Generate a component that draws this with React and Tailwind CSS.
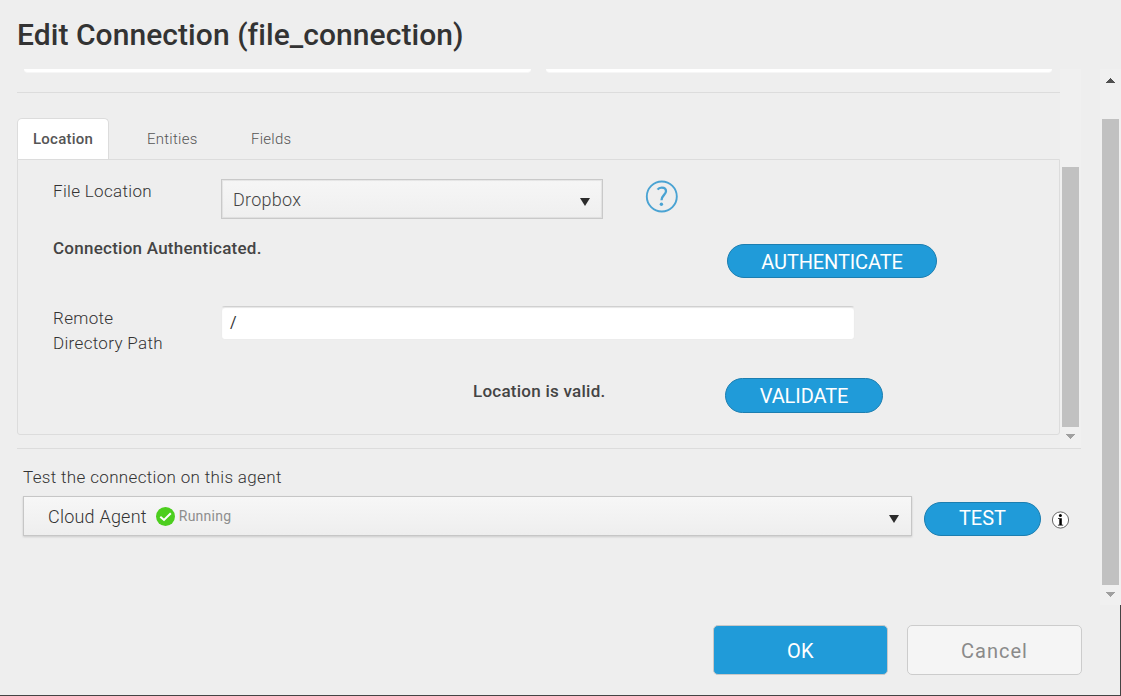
import React from "react";

function Arrow({ up = false, className }) {
  return (
    <svg className={className} width="9" height="5" viewBox="0 0 9 5" fill="currentColor" shapeRendering="crispEdges">
      <path d={up ? "M0 5L4.5 0L9 5Z" : "M0 0H9L4.5 5Z"} />
    </svg>
  );
}

function Caret() {
  return (
    <svg width="10" height="8" viewBox="0 0 10 8" fill="#2b2b2b">
      <path d="M0 0H10L5 8Z" />
    </svg>
  );
}

function PillButton({ className, children }) {
  return (
    <button
      className={`flex shrink-0 justify-center rounded-full border border-[#1c7eb0] bg-[#209bd9] text-[20px] whitespace-nowrap text-white ${className}`}
    >
      {children}
    </button>
  );
}

function Header() {
  return (
    <header className="h-[69px] shrink-0 pt-[15px] pl-[17px]">
      <h1 className="text-[30px] leading-10 font-medium tracking-[0.06px] text-[#333]">
        Edit Connection (file_connection)
      </h1>
    </header>
  );
}

function Tabs() {
  return (
    <nav className="flex h-[41px] text-[15px] leading-[42px] tracking-[0.25px] text-[#555]">
      <span className="w-[92px] rounded-t-[5px] border border-b-0 border-[#dcdcdc] bg-white pl-[15px] font-medium leading-10 text-[#555]">
        Location
      </span>
      <span className="ml-[38px] w-[104px] font-light">Entities</span>
      <span className="font-light">Fields</span>
    </nav>
  );
}

function LocationPanel() {
  return (
    <section className="h-[276px] rounded-b-[3px] border border-[#dcdcdc] text-[17px] leading-[25px] tracking-[0.33px] text-[#333]">
      <div className="flex h-[84px] pt-[19px] pl-[35px]">
        <span className="w-[168px] font-light">File Location</span>
        <div className="flex h-10 w-[382px] items-center justify-between border border-[#c9c9c9] bg-linear-to-b from-[#f6f6f6] to-[#efefef] pr-3 pl-[11px] inset-shadow-[0_0_1px_1px_rgba(0,0,0,0.07)]">
          <span className="text-[18px] font-light tracking-[0.25px] text-[#444]">Dropbox</span>
          <span className="pt-[5px]">
            <Caret />
          </span>
        </div>
        <svg className="ml-[42px]" width="34" height="34" viewBox="0 0 34 34" fill="none" stroke="#4aa3d3">
          <circle cx="16.8" cy="17.5" r="15" strokeWidth="1.9" />
          <path d="M12.6 10.6C13.5 9.2 15 8.6 16.8 8.6C19.4 8.6 21 10 21 12.2C21 15.6 16.5 16.4 16.5 21.2" strokeWidth="2.3" />
          <circle cx="16.4" cy="25.2" r="1.7" fill="#4aa3d3" stroke="none" />
        </svg>
      </div>
      <div className="flex h-[62px] pl-[35px]">
        <span className="-mt-2 w-[674px] font-medium tracking-[0.25px] text-[#444]">Connection Authenticated.</span>
        <PillButton className="h-[34px] w-[210px] leading-[34px] tracking-[-0.12px]">AUTHENTICATE</PillButton>
      </div>
      <div className="flex h-[72px] pl-[35px]">
        <span className="w-[168px] font-light">
          Remote
          <br />
          Directory Path
        </span>
        <div className="h-[34px] w-[634px] rounded-[4px] border border-[#ececec] border-t-[#d0d0d0] bg-white pl-[8px] text-[16px] leading-[31px] text-[#333] inset-shadow-[0_1px_1px_rgba(0,0,0,0.1)]">
          /
        </div>
      </div>
      <div className="flex pl-[455px]">
        <span className="w-[252px] pt-px font-medium tracking-[0.25px] text-[#444]">Location is valid.</span>
        <PillButton className="h-[35px] w-[158px] leading-[34px] tracking-[-0.1px]">VALIDATE</PillButton>
      </div>
    </section>
  );
}

function AgentTest() {
  return (
    <div className="pl-[6px]">
      <p className="pt-[16px] text-[17px] leading-[25px] font-light tracking-[0.34px] text-[#333]">
        Test the connection on this agent
      </p>
      <div className="mt-[6px] flex">
        <div className="flex h-10 w-[889px] items-center border border-[#c6c6c6] bg-linear-to-b from-[#f7f7f7] to-[#eeeeee] pr-3 pl-6 shadow-[0_1px_2px_rgba(0,0,0,0.15)]">
          <span className="text-[18px] font-light tracking-[0.22px] text-[#333]">Cloud Agent</span>
          <svg className="ml-[9px]" width="19" height="19" viewBox="0 0 19 19" fill="none">
            <circle cx="9.5" cy="9.5" r="9.5" fill="#4cce1e" />
            <path d="M4.3 9.7L8 13L14.8 6.2" stroke="#fff" strokeWidth="2" />
          </svg>
          <span className="ml-[4px] text-[14px] tracking-[0.25px] text-[#8e8e8e]">Running</span>
          <span className="ml-auto pt-[5px]">
            <Caret />
          </span>
        </div>
        <PillButton className="mt-[6px] ml-[12px] h-[34px] w-[117px] leading-[31px]">TEST</PillButton>
        <svg className="mt-[15px] ml-[11px]" width="18" height="18" viewBox="0 0 18 18">
          <circle cx="8.5" cy="9" r="8.1" fill="#fff" stroke="#555" strokeWidth="0.9" />
          <circle cx="8.4" cy="4.6" r="1.5" fill="#000" />
          <path d="M6 7.2H9.8V13.7H11.2V14.6H5.9V13.7H7.3V8.1H6Z" fill="#000" />
        </svg>
      </div>
    </div>
  );
}

export default function App() {
  return (
    <div className="flex h-[696px] w-[1121px] flex-col overflow-hidden border-b border-[#444] bg-[#eeeeee] font-['Roboto',sans-serif]">
      <Header />
      <main className="flex h-[536px] shrink-0">
        <div className="w-[1100px] pl-[17px]">
          <div className="flex h-[380px] w-[1064px] border-b border-[#dcdcdc]">
            <div className="w-[1043px]">
              <div className="flex h-6 gap-[15px] border-b border-[#dcdcdc] pl-[7px]">
                <div className="h-1 w-[507px] rounded-b-[4px] border-b border-[#f6f6f6] bg-white" />
                <div className="h-1 w-[506px] rounded-b-[4px] border-b border-[#f6f6f6] bg-white" />
              </div>
              <div className="h-[25px]" />
              <Tabs />
              <LocationPanel />
            </div>
            <div className="flex w-[21px] flex-col items-center bg-[#f0f0f0] pt-[98px]">
              <div className="h-[260px] w-[17px] bg-[#c1c1c1]" />
              <Arrow className="mt-[7px] text-[#a0a0a0]" />
            </div>
          </div>
          <AgentTest />
        </div>
        <div className="flex w-[21px] flex-col items-center bg-[#f0f0f0] pt-[9px]">
          <Arrow up className="text-[#505050]" />
          <div className="mt-[36px] h-[466px] w-[17px] bg-[#c1c1c1]" />
          <Arrow className="mt-[7px] text-[#a0a0a0]" />
        </div>
      </main>
      <footer className="flex grow gap-[19px] border-r border-[#444] pt-[20px] pl-[713px] text-[20px] leading-[30px]">
        <button className="h-[50px] w-[175px] rounded-[5px] border border-[#c8c8c8] bg-[#209bd9] pt-0.5 tracking-[0.3px] text-white">
          OK
        </button>
        <button className="h-[50px] w-[175px] rounded-[5px] border border-[#cccccc] bg-[#f5f5f5] pt-0.5 tracking-[1px] text-[#8a8a8a]">
          Cancel
        </button>
      </footer>
    </div>
  );
}
